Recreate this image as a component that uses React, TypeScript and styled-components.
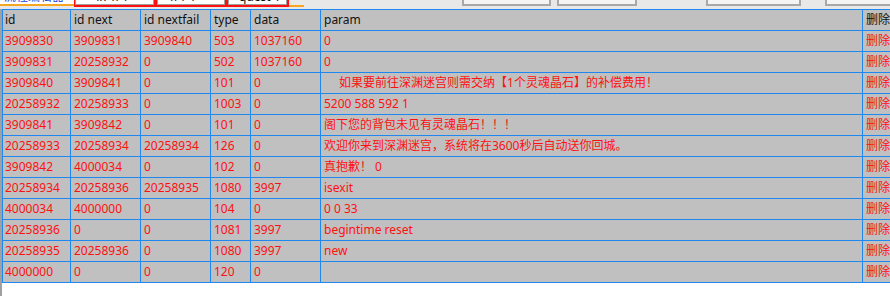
import styled, { createGlobalStyle } from "styled-components";

const GlobalStyle = createGlobalStyle`
    html, body {
        margin: 0;
        padding: 0;
        background: #ffffff;
        overflow: hidden;
    }
    body {
        font-family: "Noto Sans", "Noto Sans CJK SC", sans-serif;
        font-size: 12px;
    }
`;

interface IRow {
    id: string
    next: string
    fail: string
    type: string
    data: string
    param: string
}

const rows: IRow[] = [
    { id: "3909830", next: "3909831", fail: "3909840", type: "503", data: "1037160", param: "0" },
    { id: "3909831", next: "20258932", fail: "0", type: "502", data: "1037160", param: "0" },
    { id: "3909840", next: "3909841", fail: "0", type: "101", data: "0", param: "\u3000 如果要前往深渊迷宫则需交纳【1个灵魂晶石】的补偿费用！" },
    { id: "20258932", next: "20258933", fail: "0", type: "1003", data: "0", param: "5200 588 592 1" },
    { id: "3909841", next: "3909842", fail: "0", type: "101", data: "0", param: "阁下您的背包未见有灵魂晶石！！！" },
    { id: "20258933", next: "20258934", fail: "20258934", type: "126", data: "0", param: "欢迎你来到深渊迷宫，系统将在3600秒后自动送你回城。" },
    { id: "3909842", next: "4000034", fail: "0", type: "102", data: "0", param: "真抱歉！ 0" },
    { id: "20258934", next: "20258936", fail: "20258935", type: "1080", data: "3997", param: "isexit" },
    { id: "4000034", next: "4000000", fail: "0", type: "104", data: "0", param: "0 0 33" },
    { id: "20258936", next: "0", fail: "0", type: "1081", data: "3997", param: "begintime reset" },
    { id: "20258935", next: "20258936", fail: "0", type: "1080", data: "3997", param: "new" },
    { id: "4000000", next: "0", fail: "0", type: "120", data: "0", param: "" },
];

const headers = ["id", "id next", "id nextfail", "type", "data", "param", "删除"];

const Page = styled.div`
    display: flex;
    flex-direction: column;
    width: 890px;
    height: 296px;
    overflow: hidden;
`;

// only the lower edge of the toolbar is still on screen
const TopBar = styled.div`
    display: flex;
    align-items: flex-start;
    height: 9px;
    background: #e8e8e8;
    overflow: hidden;
    flex-shrink: 0;
`;

const TabLabel = styled.div`
    width: 74px;
    height: 6px;
    background: #ffffff;
    border-bottom: 2px solid #f5a623;
    box-sizing: border-box;
    flex-shrink: 0;
    color: #1c3fd8;
    line-height: 12px;
    overflow: hidden;
    padding-left: 4px;

    span {
        display: block;
        margin-top: -9px;
    }
`;

const FieldGroup = styled.div`
    display: flex;
    gap: 3px;
    height: 7px;
    padding: 0 2px 0 1px;
    background: #ff1010;
    flex-shrink: 0;
`;

const Field = styled.div<{ w: number }>`
    width: ${p => p.w}px;
    height: 4px;
    background: #ffffff;
    border: 1px solid #a0a0a0;
    border-top: none;
    overflow: hidden;
    line-height: 12px;
    color: #111;

    span {
        display: block;
        margin-top: -9px;
        padding-left: 10px;
    }
`;

const Tail = styled.div`
    width: 15px;
    height: 7px;
    border-bottom: 2px solid #f5a623;
    box-sizing: border-box;
    flex-shrink: 0;
`;

const ToolButton = styled.div<{ left: number; w: number }>`
    margin-left: ${p => p.left}px;
    width: ${p => p.w}px;
    height: 6px;
    background: #f4f4f4;
    border: 2px solid #a8a8a8;
    border-top: none;
    box-sizing: border-box;
    flex-shrink: 0;
`;

const TablePanel = styled.div`
    flex: 1;
    border-left: 2px solid #a0a0a0;
    background: #ffffff;
`;

const Grid = styled.div`
    width: 941px;
    border-top: 1px solid #1e88f0;
    border-left: 1px solid #1e88f0;
    background: #c0c0c0;
`;

const Row = styled.div`
    display: grid;
    grid-template-columns: 68px 70px 70px 40px 70px 542px 80px;
    height: 21px;
`;

const Cell = styled.div<{ head?: boolean }>`
    box-sizing: border-box;
    padding: 0 3px;
    border-right: 1px solid #1e88f0;
    border-bottom: 1px solid #1e88f0;
    color: ${p => (p.head ? "#111111" : "#ff1010")};
    line-height: 20px;
    white-space: pre;
    overflow: hidden;

    &:first-child {
        padding-left: 2px;
    }
`;

export default function App() {
    return (
        <Page>
            <GlobalStyle />
            <TopBar>
                <TabLabel><span>流程编辑器</span></TabLabel>
                <FieldGroup>
                    <Field w={77}><span>- 4x 1/4</span></Field>
                    <Field w={66}><span>1/1 1</span></Field>
                    <Field w={57}><span>quest 1</span></Field>
                </FieldGroup>
                <Tail />
                <ToolButton left={158} w={89} />
                <ToolButton left={6} w={80} />
                <ToolButton left={69} w={95} />
                <ToolButton left={24} w={80} />
            </TopBar>
            <TablePanel>
                <Grid>
                    <Row>
                        {headers.map(h => (
                            <Cell head key={h}>{h}</Cell>
                        ))}
                    </Row>
                    {rows.map((r, i) => (
                        <Row key={i}>
                            <Cell>{r.id}</Cell>
                            <Cell>{r.next}</Cell>
                            <Cell>{r.fail}</Cell>
                            <Cell>{r.type}</Cell>
                            <Cell>{r.data}</Cell>
                            <Cell>{r.param}</Cell>
                            <Cell>删除</Cell>
                        </Row>
                    ))}
                </Grid>
            </TablePanel>
        </Page>
    )
}
